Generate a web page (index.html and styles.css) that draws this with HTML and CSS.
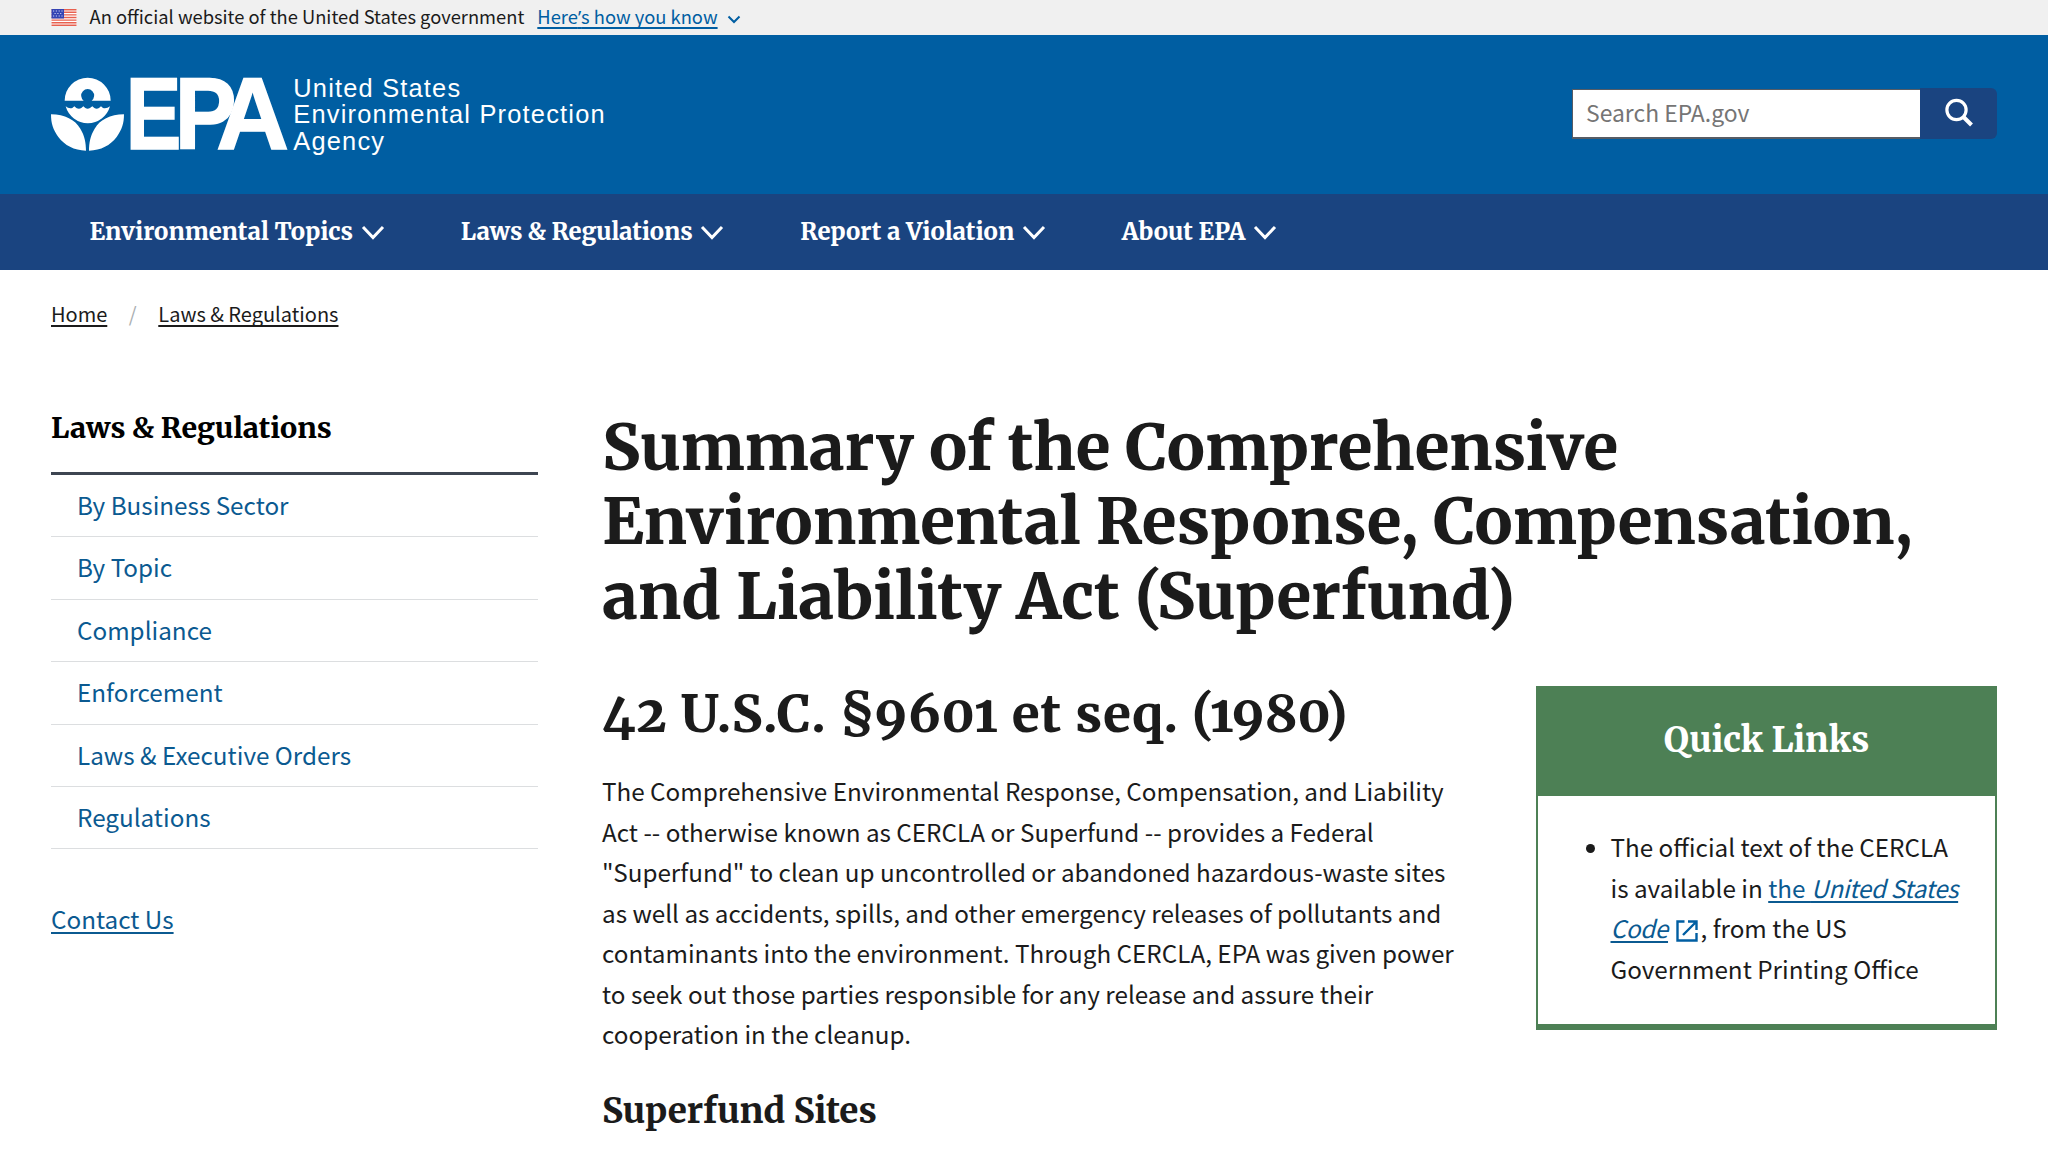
FILE: index.html
```html
<!DOCTYPE html>
<html lang="en">
<head>
<meta charset="utf-8">
<title>Summary of the Comprehensive Environmental Response, Compensation, and Liability Act (Superfund) | US EPA</title>
<link rel="stylesheet" href="styles.css">
</head>
<body>
<div class="banner">
  <svg class="flag" viewBox="0 0 25 17">
    <rect width="25" height="17" fill="#fff"/>
    <path d="M0 .7h25M0 3.3h25M0 5.9h25M0 8.5h25M0 11.1h25M0 13.7h25M0 16.3h25" stroke="#e8604f" stroke-width="1.4"/>
    <rect width="12.5" height="9.5" fill="#3544b4"/>
    <path d="M1.5 2h10M3 4.5h8M1.5 7h10" stroke="#c9cdf0" stroke-width="1.2" stroke-dasharray="1.2 1.6"/>
  </svg>
  <span class="banner-text">An official website of the United States government</span>
  <a class="banner-link" href="#">Here<span class="apos">’</span>s how you know</a>
  <svg class="banner-chevron" viewBox="0 0 14 10"><path d="M1.500 1.500l5.500 5.500 5.500-5.500" fill="none" stroke="#005ea2" stroke-width="2"/></svg>
</div>

<header class="header">
  <a class="logo" href="#">
    <svg class="logo-mark" viewBox="33 50 715 222">
      <g fill="#fff">
        <path d="M74 121A69 69 0 0 1 212 121H155A19.500 19.500 0 1 0 131 121Z"/>
        <path d="M77 138Q86 146 97 143L103 138L109 143Q117 147 124 143L130 138L136 143Q143 147 150 143L157 138L163 143Q170 147 177 143L183 138L189 143Q200 146 210 138A69 69 0 0 1 77 138Z"/>
        <path d="M33 162C75 163 105 178 121 205C134 226 138 248 138 271C102 270 74 255 55 230C39 208 33 190 33 162Z"/>
        <path d="M252 162C210 163 180 178 164 205C151 226 147 248 147 271C183 270 211 255 230 230C246 208 252 190 252 162Z"/>
      </g>
      <g class="logo-letters">
        <text transform="translate(257 266) scale(.82 1)">E</text>
        <text transform="translate(404 266) scale(.91 1)">P</text>
        <text transform="translate(529 266) scale(.99 1)">A</text>
      </g>
    </svg>
    <span class="logo-name">United States<br>Environmental Protection<br>Agency</span>
  </a>
  <form class="search">
    <input class="search-input" type="text" placeholder="Search EPA.gov">
    <button class="search-button" type="button" aria-label="Search">
      <svg viewBox="0 0 30 30"><circle cx="12.500" cy="12" r="9.600" fill="none" stroke="#fff" stroke-width="3.200"/><path d="M19 18.500l8.500 8.500" stroke="#fff" stroke-width="4"/></svg>
    </button>
  </form>
</header>

<nav class="nav">
  <a href="#">Environmental Topics<svg viewBox="0 0 24 16"><path d="M2 2l10 10.500L22 2"/></svg></a>
  <a class="tight" href="#">Laws &amp; Regulations<svg viewBox="0 0 24 16"><path d="M2 2l10 10.500L22 2"/></svg></a>
  <a href="#">Report a Violation<svg viewBox="0 0 24 16"><path d="M2 2l10 10.500L22 2"/></svg></a>
  <a href="#">About EPA<svg viewBox="0 0 24 16"><path d="M2 2l10 10.500L22 2"/></svg></a>
</nav>

<div class="crumbs"><a href="#">Home</a><span>/</span><a href="#">Laws &amp; Regulations</a></div>

<div class="page">
  <aside class="side">
    <h2 class="side-title">Laws &amp; Regulations</h2>
    <ul class="side-list">
      <li><a href="#">By Business Sector</a></li>
      <li><a href="#">By Topic</a></li>
      <li><a href="#">Compliance</a></li>
      <li><a href="#">Enforcement</a></li>
      <li><a href="#">Laws &amp; Executive Orders</a></li>
      <li><a href="#">Regulations</a></li>
    </ul>
    <a class="contact" href="#">Contact Us</a>
  </aside>
  <main class="main">
    <h1>Summary of the Comprehensive<br>Environmental Response, Compensation,<br>and Liability Act (Superfund)</h1>
    <div class="columns">
      <article class="article">
        <h2>42 U.S.C. §9601 et seq. (1980)</h2>
        <p>The Comprehensive Environmental Response, Compensation, and Liability Act -- otherwise known as CERCLA or Superfund -- provides a Federal "Superfund" to clean up uncontrolled or abandoned hazardous-waste sites as well as accidents, spills, and other emergency releases of pollutants and contaminants into the environment. Through CERCLA, EPA was given power to seek out those parties responsible for any release and assure their cooperation in the cleanup.</p>
        <h3>Superfund Sites</h3>
      </article>
      <section class="box">
        <h2 class="box-title">Quick Links</h2>
        <ul class="box-list">
          <li>The official text of the CERCLA is available in <a href="#">the <em>United States Code</em></a> <svg class="external" viewBox="0 0 22 22"><path d="M8.500 1.500H1.500V20.500H20.500V13M12 1.500H20.500V10M20 2L7 15" fill="none" stroke="#005ea2" stroke-width="2.400"/></svg>, from the US Government Printing Office</li>
        </ul>
      </section>
    </div>
  </main>
</div>
</body>
</html>
```
FILE: styles.css
```css
* { box-sizing: border-box; }
body {
  margin: 0;
  height: 1152px;
  overflow: hidden;
  background: #fff;
  color: #1b1b1b;
  font-family: "Noto Sans CJK SC", sans-serif;
  font-size: 24.26px;
  line-height: 40.5px;
}
h1, h2, h3, p, ul { margin: 0; padding: 0; }
h1, h2, h3, .nav { font-family: Merriweather, "Noto Serif", "DejaVu Serif Condensed", serif; font-weight: 800; font-variant-numeric: oldstyle-nums; }
a { color: #005ea2; text-decoration-thickness: 2px; text-underline-offset: 3px; text-decoration-skip-ink: none; }
svg { display: block; flex: none; }

.banner { display: flex; height: 35px; padding-left: 51px; background: #f0f0f0; font-size: 18.34px; line-height: 33px; white-space: nowrap; }
.flag { width: 26px; height: 17px; margin-top: 9px; }
.banner-text { margin-left: 12.5px; }
.banner-link { margin-left: 13px; }
.banner-chevron { width: 14px; height: 10px; margin: 15px 0 0 9px; }
.apos { font-family: "Noto Sans", sans-serif; }

.header { display: flex; justify-content: space-between; height: 159px; padding: 0 51px; background: #005ea2; }
.logo { display: flex; color: #fff; text-decoration: none; }
.logo-mark { width: 238.3px; height: 74px; margin-top: 42px; overflow: visible; }
.logo-letters { font: bold 305px "Liberation Sans", Arial, sans-serif; fill: #fff; stroke: #fff; stroke-width: 5px; }
.logo-name { margin: 40px 0 0 4px; font-family: "Liberation Sans", Arial, sans-serif; font-size: 25.4px; line-height: 26.4px; letter-spacing: 1.2px; white-space: nowrap; }

.search { display: flex; height: 51px; margin-top: 53px; }
.search-input { width: 348px; height: 50px; margin-top: 1px; padding: 0 13px 3px; border: 1px solid #565c65; border-right: 0; border-bottom-width: 2px; border-radius: 0; background: #fff; font-family: inherit; font-size: 22.9px; }
.search-input::placeholder { color: #757575; opacity: 1; }
.search-button { display: flex; justify-content: center; align-items: center; width: 77px; height: 51px; padding: 0; border: 0; border-radius: 0 6px 6px 0; background: #1a4480; }
.search-button svg { width: 30px; height: 30px; margin-top: -1px; }

.nav { display: flex; gap: 76.2px; height: 76px; padding-left: 89.5px; background: #1a4480; font-size: 23.8px; line-height: 76px; }
.nav a { display: flex; gap: 7.5px; color: #fff; text-decoration: none; white-space: nowrap; }
.nav .tight { letter-spacing: -.15px; }
.nav svg { width: 24px; height: 16px; margin-top: 31px; }
.nav path { fill: none; stroke: #fff; stroke-width: 3; }

.crumbs { display: flex; padding: 28.5px 0 0 51px; font-size: 20px; line-height: 30px; }
.crumbs a { color: #1b1b1b; }
.crumbs span { width: 51px; text-align: center; color: #a9aeb1; }

.page { display: flex; padding: 79.5px 51px 0; }
.side { width: 487px; margin-right: 64px; flex: none; }
.side-title { height: 67px; border-bottom: 3px solid #3d4551; color: #000; font-size: 28.5px; line-height: 41px; }
.side-list { list-style: none; }
.side-list li { height: 62.4px; padding: 10px 26px 0; border-bottom: 1px solid #dcdee0; line-height: 40px; }
.side a, .box a { color: #0b5a91; }
.side-list a { text-decoration: none; }
.contact { display: inline-block; margin-top: 50px; line-height: 40px; }

.main { flex: 1; padding-top: 2px; }
h1 { font-size: 63.55px; line-height: 74.4px; white-space: nowrap; }
.columns { display: flex; justify-content: space-between; margin-top: 52px; }
.article { width: 862px; }
.article h2 { font-size: 51.2px; line-height: 59px; letter-spacing: .7px; word-spacing: .5px; white-space: nowrap; }
.article p { margin-top: 27px; }
.article h3 { margin-top: 35px; font-size: 34.9px; line-height: 42px; }

.box { width: 461px; height: 344px; margin-top: 1px; border: 2px solid #4d8055; border-top: 0; border-bottom-width: 6px; }
.box-title { height: 110px; background: #4d8055; color: #fff; text-align: center; font-size: 34.4px; line-height: 107px; }
.box-list { padding: 31px 28px 0 72.5px; }
.box-list em { letter-spacing: -.28px; }
.external { display: inline-block; width: 22px; height: 22px; margin: 0 2px 0 3px; vertical-align: -4px; }
```
